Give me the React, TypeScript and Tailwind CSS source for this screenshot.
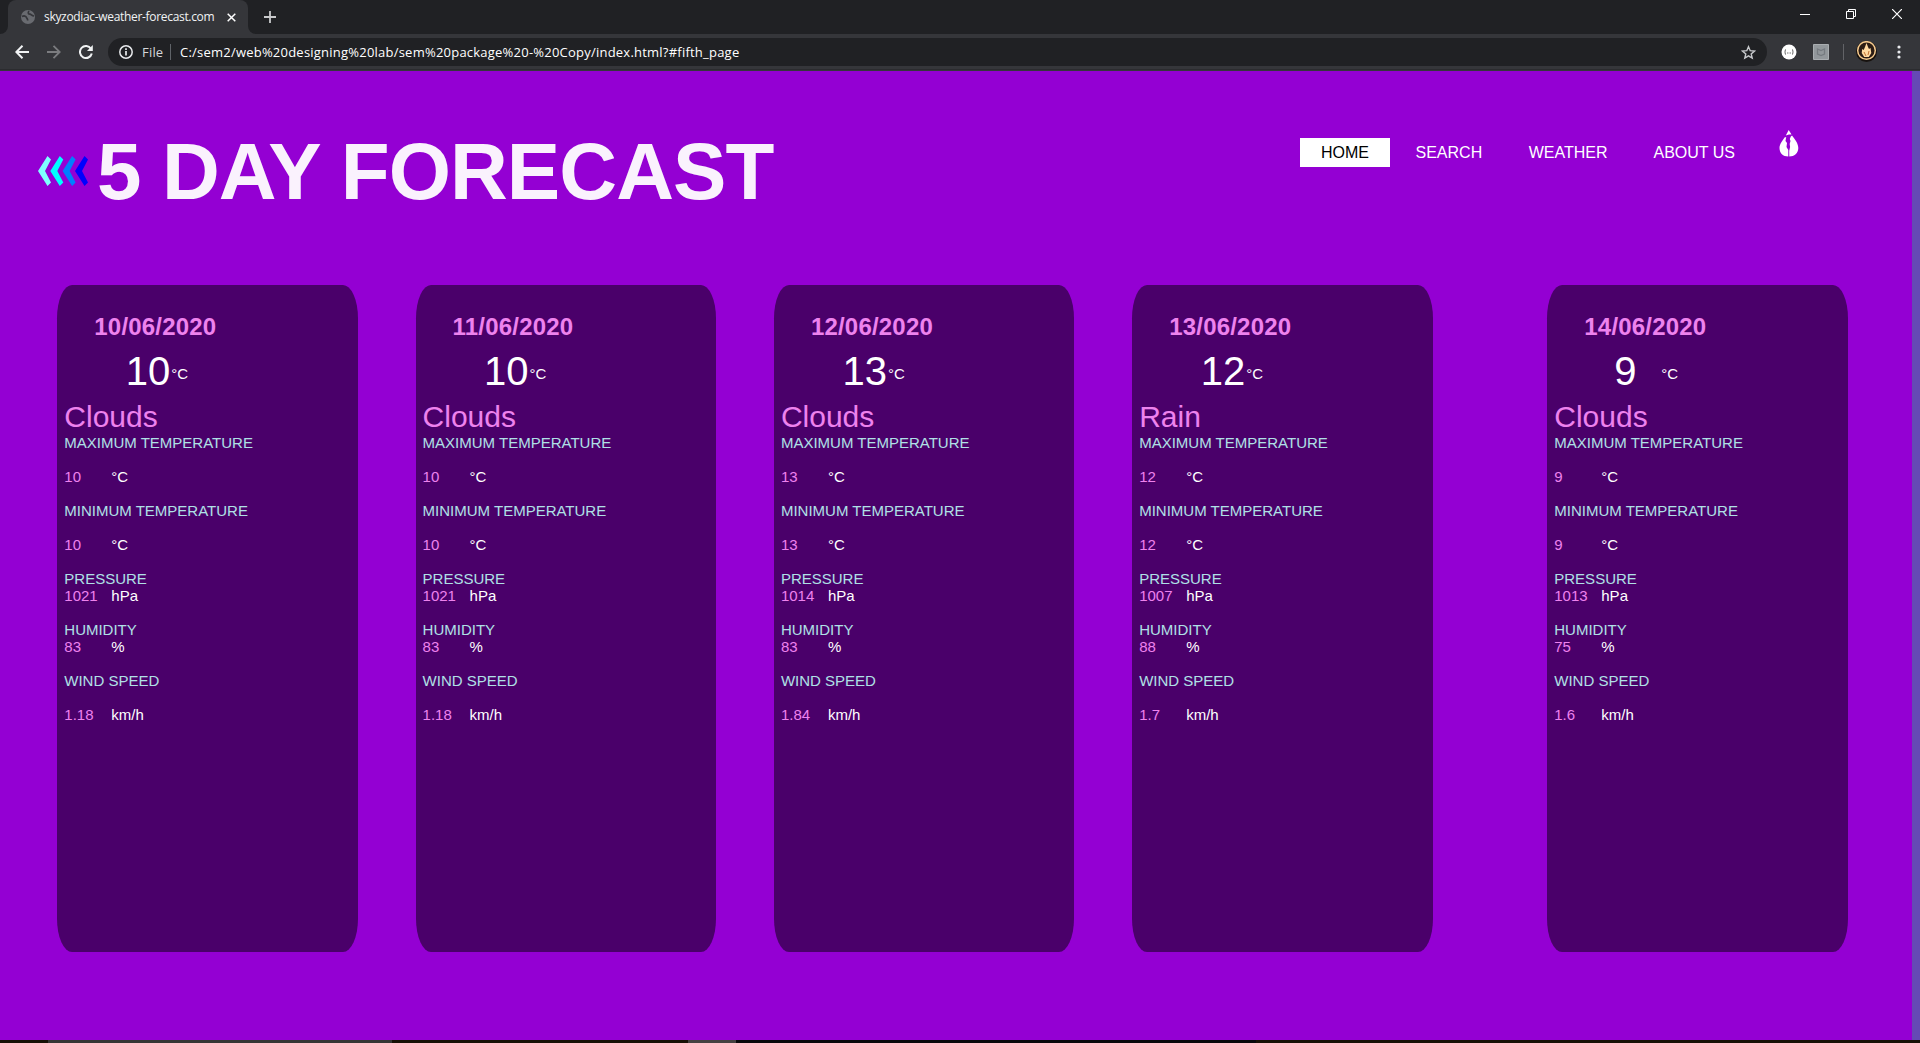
import React from "react";

const days = [
  { date: "10/06/2020", temp: "10", sky: "Clouds", pressure: "1021", humidity: "83", wind: "1.18" },
  { date: "11/06/2020", temp: "10", sky: "Clouds", pressure: "1021", humidity: "83", wind: "1.18" },
  { date: "12/06/2020", temp: "13", sky: "Clouds", pressure: "1014", humidity: "83", wind: "1.84" },
  { date: "13/06/2020", temp: "12", sky: "Rain", pressure: "1007", humidity: "88", wind: "1.7" },
  { date: "14/06/2020", temp: "9", sky: "Clouds", pressure: "1013", humidity: "75", wind: "1.6" },
];

type Day = (typeof days)[number];

function Reading({ label, value, unit, spaced }: { label: string; value: string; unit: string; spaced?: boolean }) {
  return (
    <div className="mb-[17px]">
      <p className="text-[#b0e0e6]">{label}</p>
      <p className={spaced ? "mt-[17px] flex" : "flex"}>
        <span className="w-[47px] text-[#ee82ee]">{value}</span>
        <span className="text-white">{unit}</span>
      </p>
    </div>
  );
}

function DayCard({ day }: { day: Day }) {
  const single = day.temp.length === 1;
  return (
    <article className="h-[667px] w-[300.6px] shrink-0 rounded-[5%] bg-[#4a006a] pl-[7px] pt-7 text-[15px] leading-[17px]">
      <h2 className="ml-[30px] text-2xl leading-[27px] font-bold tracking-[0.2px] text-[#ee82ee]">{day.date}</h2>
      <div className="mt-2 flex h-[46px] items-start text-white">
        <span className={single ? "ml-[60px] w-[47px] text-[40px] leading-[46px]" : "ml-[61.5px] w-[45.5px] text-[40px] leading-[46px]"}>{day.temp}</span>
        <span className="mt-[17px]">°C</span>
      </div>
      <p className="mt-[6px] text-[30px] leading-[34px] text-[#ee82ee]">{day.sky}</p>
      <Reading label="MAXIMUM TEMPERATURE" value={day.temp} unit="°C" spaced />
      <Reading label="MINIMUM TEMPERATURE" value={day.temp} unit="°C" spaced />
      <Reading label="PRESSURE" value={day.pressure} unit="hPa" />
      <Reading label="HUMIDITY" value={day.humidity} unit="%" />
      <Reading label="WIND SPEED" value={day.wind} unit="km/h" spaced />
    </article>
  );
}

function BrowserChrome() {
  return (
    <header className="h-[71px] bg-[#35363a] font-['Open_Sans',sans-serif]">
      <div className="flex h-[34px] bg-[#202124]">
        <div className="flex w-2 items-end bg-[#35363a]">
          <div className="h-[34px] w-2 rounded-br-lg bg-[#202124]" />
        </div>
        <div className="flex w-[240px] items-center rounded-t-lg bg-[#35363a] pl-3">
          <svg className="size-[16px]" viewBox="0 0 16 16">
            <circle cx="8" cy="8" r="7" fill="#696b70" />
            <path d="M2 7.500c2-1 4-.5 4.500 1s1.500 1 1 3M9 2c-1.500 2-.5 3 1 3.200S11.500 7 14 7" fill="none" stroke="#35363a" strokeWidth="1.700" />
          </svg>
          <span className="ml-2 w-[172px] text-[12px] tracking-[-0.32px] whitespace-nowrap text-[#f1f3f4]">skyzodiac-weather-forecast.com</span>
          <svg className="ml-[11px] size-[9px]" viewBox="0 0 9 9" stroke="#fff" strokeWidth="1.5">
            <path d="M.7.7l7.6 7.6M8.3.7L.7 8.3" />
          </svg>
        </div>
        <div className="flex w-2 items-end bg-[#35363a]">
          <div className="h-[34px] w-2 rounded-bl-lg bg-[#202124]" />
        </div>
        <svg className="mt-[11px] ml-2 size-3" viewBox="0 0 12 12" stroke="#c9cacc" strokeWidth="1.8">
          <path d="M6 0v12M0 6h12" />
        </svg>
        <div className="ml-auto flex gap-[36px] pt-[9px] pr-[18px]">
          <svg className="size-[10px]" viewBox="0 0 10 10" stroke="#fff"><path d="M0 5.5h10" /></svg>
          <svg className="size-[10px]" viewBox="0 0 10 10" fill="none" stroke="#fff"><path d="M.5 2.5h7v7h-7zM2.5 2.5v-2h7v7h-2" /></svg>
          <svg className="size-[10px]" viewBox="0 0 10 10" stroke="#fff" strokeWidth="1.2"><path d="M0 0l10 10M10 0L0 10" /></svg>
        </div>
      </div>
      <div className="flex h-9 items-center border-b border-[#2b2c2f] pt-px pl-[15px]">
        <svg className="size-[14px]" viewBox="0 0 14 14" fill="none" stroke="#f1f3f4" strokeWidth="2"><path d="M14 7H1.5M7.5.8L1.3 7l6.2 6.2" /></svg>
        <svg className="ml-[18px] size-[14px]" viewBox="0 0 14 14" fill="none" stroke="#7b7c7f" strokeWidth="1.8"><path d="M0 7h12.500M6.500.8L12.700 7l-6.200 6.200" /></svg>
        <svg className="ml-[18px] size-[14px]" viewBox="0 0 14 14" fill="none" stroke="#f1f3f4" strokeWidth="2">
          <path d="M12 3.700A6 6 0 1 0 12.800 8.500" /><path d="M13.800 0v6H8z" fill="#f1f3f4" stroke="none" />
        </svg>
        <div className="ml-[15px] flex h-7 w-[1659px] items-center rounded-full bg-[#202124] pl-[11px]">
          <svg className="size-[14px]" viewBox="0 0 14 14" fill="none" stroke="#e8eaed" strokeWidth="1.5">
            <circle cx="7" cy="7" r="6.200" /><path d="M7 6v4.500M7 3.300v1.600" strokeWidth="1.700" />
          </svg>
          <span className="mt-px ml-[9px] w-7 text-[13px] tracking-[0.2px] text-[#d5d7da]">File</span>
          <span className="h-4 w-px bg-[#5f6368]" />
          <span className="mt-px ml-[9px] text-[13px] tracking-[0.225px] text-white">C:/sem2/web%20designing%20lab/sem%20package%20-%20Copy/index.html?#fifth_page</span>
          <svg className="mr-[11px] ml-auto size-[15px]" viewBox="0 0 15 15" fill="none" stroke="#c8cacd" strokeWidth="1.400">
            <path d="M7.500 1.700l1.700 4 4.300.4-3.300 2.800 1 4.200-3.700-2.200-3.700 2.200 1-4.200L1.500 6.100l4.300-.4z" />
          </svg>
        </div>
        <svg className="ml-[14px] size-[16px]" viewBox="0 0 16 16">
          <circle cx="8" cy="8" r="7.500" fill="#fff" />
          <path d="M5 5.500C3.800 5.500 4.700 7.600 3.600 8c1.100.4.200 2.500 1.400 2.500M11 5.500c1.200 0 .3 2.100 1.400 2.500-1.100.4-.2 2.500-1.400 2.500" fill="none" stroke="#555" />
          <path d="M6 9h4" stroke="#777" strokeDasharray="1 .5" />
        </svg>
        <svg className="ml-4 size-4" viewBox="0 0 16 16">
          <path d="M.5.500h15v15H.5z" fill="#92979b" stroke="#a9adb0" />
          <path d="M4.500 5L8 6.500 11.500 5v5L8 11.500 4.500 10z" fill="none" stroke="#767b80" strokeWidth="1.300" />
        </svg>
        <span className="ml-[14px] h-4 w-px bg-[#626367]" />
        <svg className="-mt-px ml-3 size-[21px]" viewBox="0 0 21 21">
          <circle cx="10.500" cy="10.500" r="10.500" fill="#17120f" />
          <circle cx="10.500" cy="9.500" r="8.800" fill="#2b1c14" stroke="#f4c98d" strokeWidth="1.500" />
          <path d="M10.500 2l1.500 4 1 2 1.500-1 .8 5-2.500 4H8.200l-2.500-4 .5-4 1.500 1L9 6z" fill="#ffd9a0" />
          <path d="M8 11l2 4M13 10l-1 4" stroke="#c07030" />
        </svg>
        <svg className="ml-[20px] h-[14px] w-1" viewBox="0 0 4 14" fill="#e8eaed"><circle cx="2" cy="2" r="1.600" /><circle cx="2" cy="7" r="1.600" /><circle cx="2" cy="12" r="1.600" /></svg>
      </div>
    </header>
  );
}

export default function App() {
  return (
    <div className="flex h-[1043px] w-[1920px] flex-col overflow-hidden font-['Liberation_Sans',Arial,sans-serif]">
      <BrowserChrome />
      <div className="flex h-[969px]">
        <main className="w-[1912px] bg-[#9400d3]">
          <div className="flex h-[214px] items-start pl-[38px]">
            <svg className="mt-[85px] h-[30px] w-[51px]" viewBox="0 0 51 30">
              <path d="M0 15L9.500 0 13 3.500 7 15l6 11.500L9.500 30z" fill="#7fffff" />
              <path d="M12.300 15L21.800 0l3.500 3.500L19.300 15l6 11.500-3.500 3.500z" fill="#00ffff" />
              <path d="M24.600 15L34.100 0l3.500 3.500L31.600 15l6 11.500-3.500 3.500z" fill="#007fff" />
              <path d="M37 15L46.500 0 50 3.500 44 15l6 11.500-3.500 3.500z" fill="#0000ff" />
            </svg>
            <h1 className="mt-[55px] ml-2 w-[1203px] text-[80px] leading-[92px] font-bold tracking-[-0.9px] whitespace-nowrap text-[#faf2fd]">5 DAY FORECAST</h1>
            <nav className="mt-[67px] flex h-[29px] items-center text-base text-white">
              <a className="flex h-[29px] w-[90px] items-center justify-center bg-white text-black">HOME</a>
              <a className="ml-[25.5px]">SEARCH</a>
              <a className="ml-[46.5px]">WEATHER</a>
              <a className="ml-[46px]">ABOUT US</a>
            </nav>
            <svg className="mt-[59px] ml-[44px] h-[27px] w-5" viewBox="0 0 20 27" fill="#fff">
              <path d="M9.700 0l2.800 4.500-2.500 0L6.800 5.500z" />
              <path d="M5.500 7.500L7.200 7l-.7 4L8 13l-.5 4L9.300 20v6.500C4 26.500.5 23 .5 18 .5 14 3.500 11 5.500 7.500z" />
              <path d="M13 5.500c3 4 6.300 8 6.300 12.500 0 5-4 8.500-9 8.500L10.200 21l.9-4-.4-3 .8-3-.7-2 1-2.500z" />
            </svg>
          </div>
          <div className="flex pl-[57.3px]">
            {days.map((day, i) => (
              <div key={day.date} className={i === 4 ? "w-[301px]" : i === 3 ? "w-[415.100px] shrink-0" : "w-[358.300px] shrink-0"}>
                <DayCard day={day} />
              </div>
            ))}
          </div>
        </main>
        <div className="w-2 bg-[#6549b5]" />
      </div>
      <footer className="flex h-[3px] bg-[#171006]">
        <div className="ml-12 w-[344px] bg-[#353535]" />
        <div className="ml-[296px] w-12 bg-[#454142]" />
        <div className="w-[520px] bg-[#08080c]" />
      </footer>
    </div>
  );
}
